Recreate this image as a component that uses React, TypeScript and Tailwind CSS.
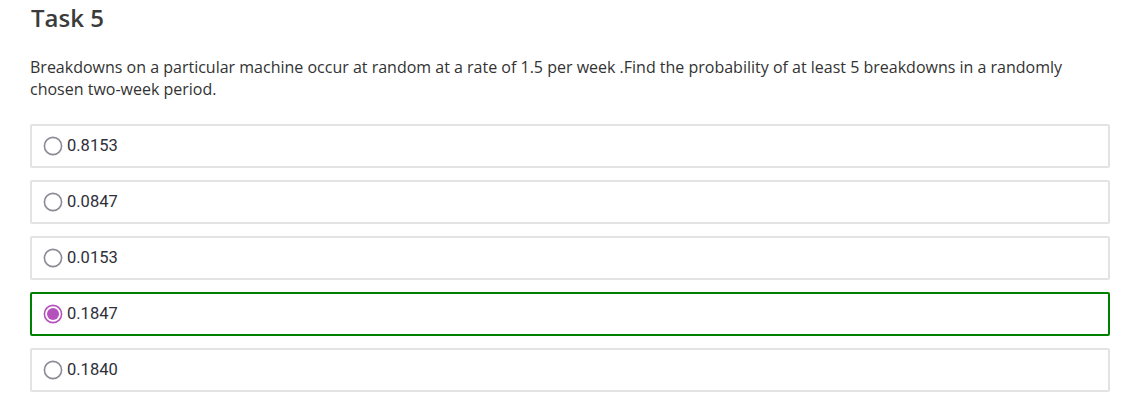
import React from "react";

const options = [
  { id: "a", label: "0.8153" },
  { id: "b", label: "0.0847" },
  { id: "c", label: "0.0153" },
  { id: "d", label: "0.1847" },
  { id: "e", label: "0.1840" },
];

const Radio = ({ checked }: { checked: boolean }) => {
  if (checked) {
    return (
      <svg width="20" height="20" viewBox="0 0 20 20" className="shrink-0">
        <circle cx="10" cy="10" r="8.6" fill="white" stroke="#b551bd" strokeWidth="1.6" />
        <circle cx="10" cy="10" r="6" fill="#b551bd" />
      </svg>
    );
  }
  return (
    <svg width="20" height="20" viewBox="0 0 20 20" className="shrink-0">
      <circle cx="10" cy="10" r="8.6" fill="white" stroke="#8b8b96" strokeWidth="1.6" />
    </svg>
  );
};

const App = () => {
  const selected = "d";
  return (
    <div className="min-h-[405px] bg-white pl-[30px] pr-[22px] pt-[2px] font-['Open_Sans',sans-serif] text-[#333]">
      <h2 className="pl-px text-[24px] font-semibold leading-[32px] text-[#3b3b3b]">
        Task 5
      </h2>
      <p className="mt-[22px] max-w-[1060px] text-[16px] leading-[22px]">
        Breakdowns on a particular machine occur at random at a rate of 1.5 per week .Find the
        probability of at least 5 breakdowns in a randomly chosen two-week period.
      </p>
      <div className="mt-[24px] flex flex-col gap-[12px]">
        {options.map((opt) => {
          const isSel = opt.id === selected;
          return (
            <label
              key={opt.id}
              className={`flex h-[44px] items-center gap-[4px] rounded-[2px] border-2 bg-white pl-[11px] ${
                isSel ? "border-[#008000]" : "border-[#e3e3e3]"
              }`}
            >
              <Radio checked={isSel} />
              <span className="font-['Roboto',sans-serif] text-[16.5px] text-[#2f2f3a]">
                {opt.label}
              </span>
            </label>
          );
        })}
      </div>
    </div>
  );
};

export default App;
